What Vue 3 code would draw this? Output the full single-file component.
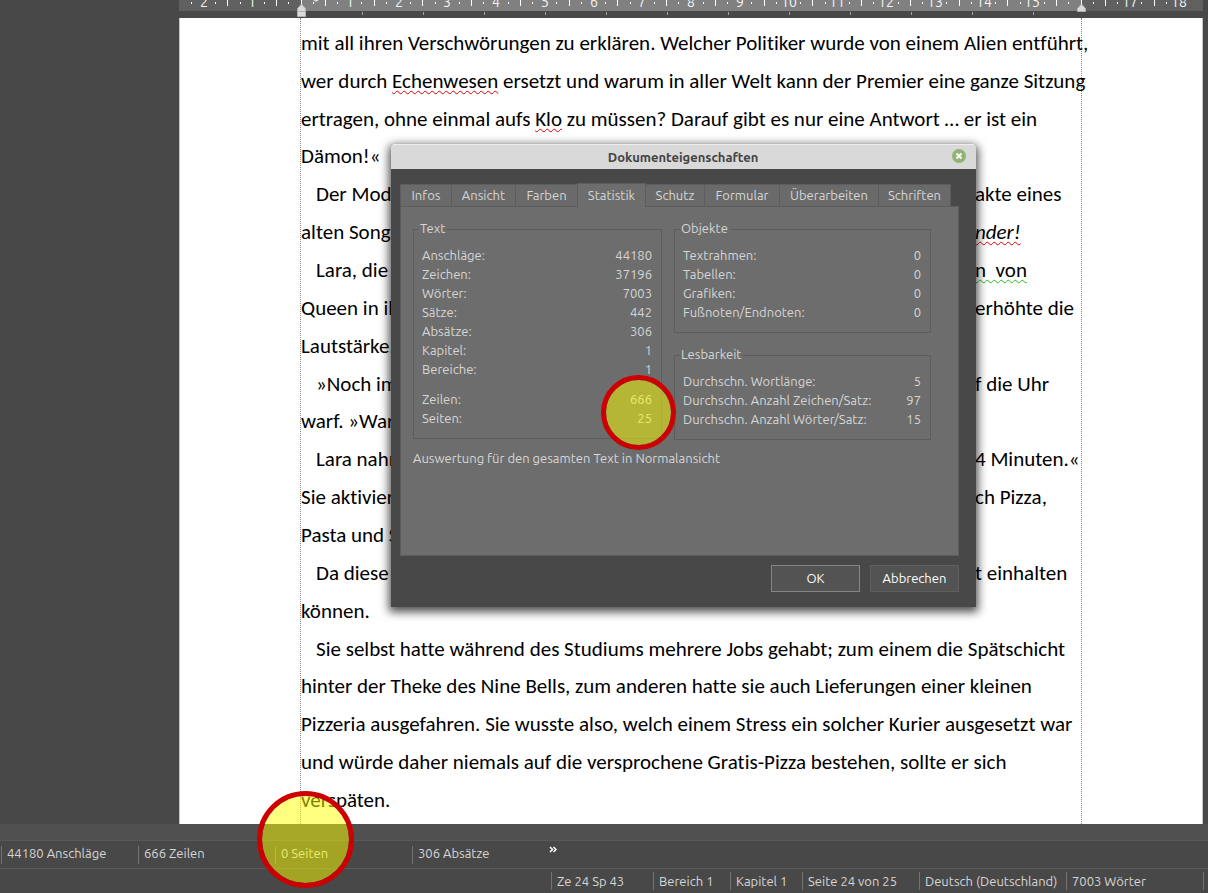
<script setup>
import { ref } from 'vue'

const cm = 48.75
const zero = 122

const labels = [-2, -1, 1, 2, 3, 4, 5, 6, 7, 8, 9, 10, 11, 12, 13, 14, 15, 17, 18].map((n) => ({
  text: Math.abs(n),
  x: Math.round(zero + n * cm),
}))
const ticks = [0, 16]
for (let n = -2; n < 18; n++) ticks.push(n + 0.5)
const tickXs = ticks.map((n) => Math.floor(zero + n * cm))
const dotXs = []
for (let n = -2; n < 18; n++) {
  dotXs.push(Math.floor(zero + (n + 0.25) * cm), Math.floor(zero + (n + 0.75) * cm))
}
dotXs.push(Math.floor(zero - 2.25 * cm))
const tabStops = Array.from({ length: 12 }, (_, i) => 183 + i * 61)

const lines = [
  { parts: [{ t: 'mit all ihren Verschwörungen zu erklären. Welcher Politiker wurde von einem Alien entführt,' }] },
  { parts: [{ t: 'wer durch ' }, { t: 'Echenwesen', c: 'spell' }, { t: ' ersetzt und warum in aller Welt kann der Premier eine ganze Sitzung' }] },
  { parts: [{ t: 'ertragen, ohne einmal aufs ' }, { t: 'Klo', c: 'spell' }, { t: ' zu müssen? Darauf gibt es nur eine Antwort … er ist ein' }] },
  { parts: [{ t: 'Dämon!«' }] },
  { indent: true, parts: [{ t: 'Der Mod' }], end: 'akte eines' },
  { parts: [{ t: 'alten Songs' }], end: 'nder!', endClass: 'spell italic' },
  { indent: true, parts: [{ t: 'Lara, die j' }], end: 'n  von', endClass: 'grammar' },
  { parts: [{ t: 'Queen in ih' }], end: 'erhöhte die' },
  { parts: [{ t: 'Lautstärke.' }] },
  { indent: true, parts: [{ t: '»Noch im' }], end: 'f die Uhr' },
  { parts: [{ t: 'warf. »War' }] },
  { indent: true, parts: [{ t: 'Lara nahm' }], end: '4 Minuten.«' },
  { parts: [{ t: 'Sie aktivier' }], end: 'ch Pizza,' },
  { parts: [{ t: 'Pasta und S' }] },
  { indent: true, parts: [{ t: 'Da diese' }], end: 't einhalten' },
  { parts: [{ t: 'können.' }] },
  { indent: true, parts: [{ t: 'Sie selbst hatte während des Studiums mehrere Jobs gehabt; zum einem die Spätschicht' }] },
  { parts: [{ t: 'hinter der Theke des Nine Bells, zum anderen hatte sie auch Lieferungen einer kleinen' }] },
  { parts: [{ t: 'Pizzeria ausgefahren. Sie wusste also, welch einem Stress ein solcher Kurier ausgesetzt war' }] },
  { parts: [{ t: 'und würde daher niemals auf die versprochene Gratis-Pizza bestehen, sollte er sich' }] },
  { parts: [{ t: 'verspäten.' }] },
]

const tabs = ['Infos', 'Ansicht', 'Farben', 'Statistik', 'Schutz', 'Formular', 'Überarbeiten', 'Schriften']
const activeTab = ref('Statistik')

const textStats = [
  ['Anschläge:', '44180'],
  ['Zeichen:', '37196'],
  ['Wörter:', '7003'],
  ['Sätze:', '442'],
  ['Absätze:', '306'],
  ['Kapitel:', '1'],
  ['Bereiche:', '1'],
]
const pageStats = [
  ['Zeilen:', '666'],
  ['Seiten:', '25'],
]
const objectStats = [
  ['Textrahmen:', '0'],
  ['Tabellen:', '0'],
  ['Grafiken:', '0'],
  ['Fußnoten/Endnoten:', '0'],
]
const readability = [
  ['Durchschn. Wortlänge:', '5'],
  ['Durchschn. Anzahl Zeichen/Satz:', '97'],
  ['Durchschn. Anzahl Wörter/Satz:', '15'],
]

const counters = ['44180 Anschläge', '666 Zeilen', '0 Seiten', '306 Absätze']
const position = ['Ze 24 Sp 43', 'Bereich 1', 'Kapitel 1', 'Seite 24 von 25', 'Deutsch (Deutschland)', '7003 Wörter']
</script>

<template>
  <div class="app">
    <main class="workspace">
      <div class="ruler">
        <svg class="scale" height="18" width="100%" aria-hidden="true">
          <rect class="scale-margin" x="0" y="0" width="100%" height="11" />
          <rect class="scale-body" x="122" y="0" width="780" height="11" />
          <rect v-for="x in tickXs" :key="'t' + x" class="mark" :x="x" y="0" width="1" height="6" />
          <rect v-for="x in dotXs" :key="'d' + x" class="mark" :x="x" y="2" width="1" height="2" />
          <text v-for="l in labels" :key="'l' + l.x" class="num" :x="l.x" y="7" text-anchor="middle">{{ l.text }}</text>
          <rect v-for="x in tabStops" :key="'s' + x" class="stop" :x="x" y="12" width="1" height="3" />
          <path class="stop-light" d="M134 0h6l-3 2z" />
          <path class="handle" d="M118.500 16.500v-8l4-4.500l4 4.500v8zM118.500 11.500h8" />
          <path class="handle" d="M898.500 11.500v-3l4-4.500l4 4.500v3z" />
        </svg>
      </div>
      <article class="page">
        <div class="column">
          <p v-for="(line, i) in lines" :key="i" class="line" :class="{ indent: line.indent }">
            <span><span v-for="(p, j) in line.parts" :key="j" :class="p.c">{{ p.t }}</span></span>
            <span v-if="line.end" class="end"><span :class="line.endClass">{{ line.end }}</span></span>
          </p>
        </div>
      </article>
    </main>

    <footer class="status">
      <div class="gutter"></div>
      <div class="bar counters">
        <span v-for="c in counters" :key="c" class="cell">{{ c }}</span>
        <button class="more" type="button" aria-label="Mehr">
          <svg width="8" height="7" viewBox="0 0 8 7"><path d="M1 1l2.500 2.500l-2.500 2.500M4.500 1l2.500 2.500l-2.500 2.500" /></svg>
        </button>
      </div>
      <div class="bar position">
        <span v-for="c in position" :key="c" class="cell">{{ c }}</span>
        <span class="cell"></span>
      </div>
      <div class="ring ring-status"></div>
    </footer>

    <section class="dialog" role="dialog" aria-labelledby="dialog-title">
      <header class="titlebar">
        <h1 id="dialog-title">Dokumenteigenschaften</h1>
        <button class="close" type="button" aria-label="Schließen">
          <svg width="14" height="14" viewBox="0 0 14 14">
            <circle cx="7" cy="7" r="7" />
            <path d="M4.500 4.500l5 5M9.500 4.500l-5 5" />
          </svg>
        </button>
      </header>
      <div class="content">
        <div class="tabs" role="tablist">
          <button
            v-for="t in tabs"
            :key="t"
            class="tab"
            :class="{ active: t === activeTab }"
            type="button"
            role="tab"
            :aria-selected="t === activeTab"
            @click="activeTab = t"
          >{{ t }}</button>
        </div>
        <div class="panel" role="tabpanel">
          <div class="groups">
            <fieldset class="tall">
              <legend>Text</legend>
              <dl>
                <div v-for="r in textStats" :key="r[0]" class="row"><dt>{{ r[0] }}</dt><dd>{{ r[1] }}</dd></div>
              </dl>
              <dl>
                <div v-for="r in pageStats" :key="r[0]" class="row"><dt>{{ r[0] }}</dt><dd>{{ r[1] }}</dd></div>
              </dl>
              <div class="ring ring-stats"></div>
            </fieldset>
            <div class="side">
              <fieldset>
                <legend>Objekte</legend>
                <dl>
                  <div v-for="r in objectStats" :key="r[0]" class="row"><dt>{{ r[0] }}</dt><dd>{{ r[1] }}</dd></div>
                </dl>
              </fieldset>
              <fieldset>
                <legend>Lesbarkeit</legend>
                <dl>
                  <div v-for="r in readability" :key="r[0]" class="row"><dt>{{ r[0] }}</dt><dd>{{ r[1] }}</dd></div>
                </dl>
              </fieldset>
            </div>
          </div>
          <p class="note">Auswertung für den gesamten Text in Normalansicht</p>
        </div>
        <div class="actions">
          <button class="btn default" type="button">OK</button>
          <button class="btn" type="button">Abbrechen</button>
        </div>
      </div>
    </section>
  </div>
</template>

<style>
body {
  margin: 0;
  background: #484848;
}
</style>

<style scoped>
.app {
  position: relative;
  display: flex;
  flex-direction: column;
  min-height: 100vh;
  overflow: hidden;
  background: #484848;
  color: #d6d6d6;
  font: 13px/16px Ubuntu, "Noto Sans", sans-serif;
}
.app * {
  box-sizing: border-box;
}
.workspace {
  flex: 1;
  display: flex;
  flex-direction: column;
  padding: 0 5px 0 179px;
}
.ruler {
  height: 18px;
}
.scale {
  display: block;
}
.scale-margin {
  fill: #606060;
}
.scale-body {
  fill: #808080;
}
.mark {
  fill: #fff;
}
.num {
  fill: #f4f4f4;
  font-size: 14px;
}
.stop {
  fill: #a0a0a0;
}
.stop-light {
  fill: #d6d6d6;
}
.handle {
  fill: #d9d9d9;
  stroke: #b0b0b0;
}
.page {
  flex: 1;
  display: flex;
  padding: 0 120px;
  background: #fff;
  border-left: 1px solid #c4c4c4;
  border-right: 1px solid #c4c4c4;
}
.column {
  flex: 1;
  display: grid;
  grid-auto-rows: 1fr;
  padding: 6px 0 5px;
  border-left: 1px dotted #888;
  border-right: 1px dotted #888;
}
.line {
  display: grid;
  grid-template-columns: 1fr 106px;
  align-items: center;
  margin: 0;
  color: #000;
  font: 21px/24px Carlito, Lato, sans-serif;
  font-variant-ligatures: none;
  white-space: pre;
}
.line > :only-child {
  grid-column: 1 / -1;
}
.indent {
  padding-left: 15px;
}
.spell {
  text-decoration: underline wavy #e00000 1px;
  text-underline-offset: 2px;
}
.grammar {
  text-decoration: underline wavy #20c020 1px;
  text-underline-offset: 2px;
}
.italic {
  font-style: italic;
}

.status {
  position: relative;
}
.gutter {
  height: 16px;
  background: #505050;
}
.bar {
  display: grid;
  height: 28px;
  align-items: center;
  border-top: 1px solid #595959;
}
.counters {
  grid-template-columns: repeat(4, 137px) auto;
  justify-content: start;
  padding-left: 1px;
}
.position {
  grid-template-columns: 102px 77px 72px 117px 147px 137px 1px;
  justify-content: end;
  height: 25px;
  padding-right: 4px;
}
.cell {
  height: 18px;
  padding-left: 5px;
  border-left: 1px solid #737373;
  line-height: 18px;
  white-space: nowrap;
}
.counters .cell {
  line-height: 14px;
}
.more {
  padding: 0 0 10px;
  border: 0;
  background: none;
  line-height: 0;
}
.more path {
  fill: none;
  stroke: #fff;
  stroke-width: 1.5;
}

.ring {
  position: absolute;
  border: 5px solid #c00;
  border-radius: 50%;
  background: rgba(255, 255, 0, 0.5);
  background-clip: padding-box;
}
.ring-status {
  left: 257px;
  top: -33px;
  width: 97px;
  height: 97px;
}
.ring-stats {
  right: -15px;
  bottom: -12px;
  width: 75px;
  height: 75px;
  z-index: 1;
}

.dialog {
  position: absolute;
  left: 391px;
  top: 144px;
  width: 585px;
  background: #484848;
  border-radius: 3px 3px 0 0;
  box-shadow: 0 3px 10px 2px rgba(0, 0, 0, 0.7);
}
.titlebar {
  display: grid;
  grid-template-columns: 24px 1fr 24px;
  align-items: center;
  height: 25px;
  padding: 0 5px 0 4px;
  background: #d9d9d9;
  border-top: 1px solid #eee;
  border-radius: 3px 3px 0 0;
}
.titlebar h1 {
  grid-column: 2;
  margin: 0;
  color: #444;
  font-size: 13px;
  font-weight: bold;
  line-height: 18px;
  text-align: center;
}
.close {
  padding: 0 0 2px;
  border: 0;
  background: none;
  line-height: 0;
}
.close circle {
  fill: #92b372;
}
.close path {
  fill: none;
  stroke: #fff;
  stroke-width: 2;
}
.content {
  padding: 14px 17px 15px 9px;
}
.tabs {
  display: grid;
  grid-template-columns: 51px 64px 62px 68px 59px 75px 99px 73px;
  align-items: end;
}
.tab {
  height: 22px;
  padding: 0 0 2px;
  border: 1px solid #5d5d5d;
  border-width: 1px 0 0 1px;
  background: #6a6a6a;
  color: #d6d6d6;
  font: inherit;
  line-height: 18px;
}
.tab:last-child {
  border-right-width: 1px;
}
.tab.active {
  height: 24px;
  margin: 0 -1px -1px 0;
  border-right-width: 1px;
  background: #6d6d6d;
  z-index: 1;
}
.panel {
  min-height: 350px;
  padding: 13px 27px 0 12px;
  border: 1px solid #5d5d5d;
  background: #6d6d6d;
}
.groups {
  display: grid;
  grid-template-columns: 249px 1fr;
  gap: 12px;
}
.side {
  display: grid;
  gap: 13px;
  align-content: start;
}
fieldset {
  position: relative;
  min-width: 0;
  margin: 0;
  padding: 7px 9px 10px 8px;
  border: 1px solid #5d5d5d;
}
.tall {
  align-self: start;
}
legend {
  margin-left: -3px;
  padding: 0 2px 3px 1px;
}
dl {
  margin: 0;
}
dl + dl {
  margin-top: 11px;
}
.row {
  display: flex;
  justify-content: space-between;
  line-height: 19px;
}
dd {
  margin: 0;
}
.note {
  margin: 10px 0 0;
}
.actions {
  display: flex;
  justify-content: flex-end;
  gap: 10px;
  padding-top: 9px;
}
.btn {
  width: 89px;
  height: 27px;
  padding: 0 0 2px;
  border: 1px solid #5e5e5e;
  background: #535353;
  color: #fff;
  font: inherit;
}
.default {
  border-color: #858585;
}
</style>
